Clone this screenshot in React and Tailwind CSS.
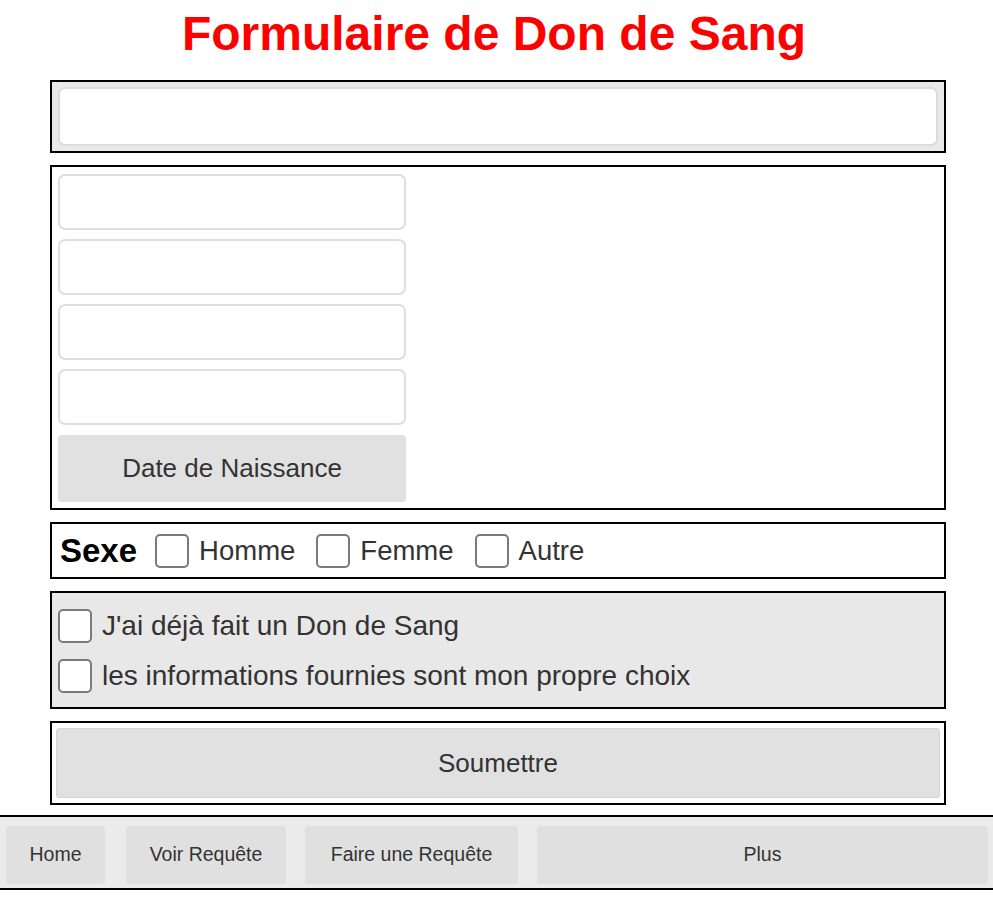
import React from 'react';

const inputCls = 'block w-[348px] h-[56px] bg-white border-2 border-[#dedede] rounded-[7px] outline-none';

function Check({ label, big }) {
    return (
        <label className="flex items-center h-[34px]">
            <input type="checkbox" className="appearance-none w-[34px] h-[34px] bg-white border-2 border-[#7a7a7a] rounded-[5px] shrink-0" />
            <span className={`ml-[10px] leading-[34px] text-[#333] ${big ? 'text-[28px]' : 'text-[27.5px]'}`}>{label}</span>
        </label>
    );
}

export default function App() {
    return (
        <div className="bg-white min-h-[900px] font-['Liberation_Sans',Arial,sans-serif]">
            <h1 className="pt-[6px] pr-[5px] text-center text-[48px] leading-[55px] font-bold text-[#ff0000]">
                Formulaire de Don de Sang
            </h1>

            <div className="ml-[50px] w-[896px] mt-[19px] flex flex-col gap-[12px]">
                {/* nom */}
                <div className="border-2 border-black bg-[#e9e9e9] px-[6px] pt-[5px] pb-[5px]">
                    <input type="text" className="block w-full h-[59px] bg-white border-2 border-[#dcdcdc] rounded-[7px] outline-none" />
                </div>

                {/* identite */}
                <div className="border-2 border-black bg-white pl-[6px] pt-[7px] pb-[6px] flex flex-col gap-[9px]">
                    <input type="text" className={inputCls} />
                    <input type="text" className={inputCls} />
                    <input type="text" className={inputCls} />
                    <input type="text" className={inputCls} />
                    <button className="w-[348px] h-[67px] mt-[1px] bg-[#e1e1e1] rounded-[4px] text-[26px] text-[#333]">
                        Date de Naissance
                    </button>
                </div>

                {/* sexe */}
                <div className="border-2 border-black bg-white h-[57px] pl-[8px] flex items-center">
                    <span className="text-[33px] leading-[40px] font-bold text-black mr-[18px]">Sexe</span>
                    <div className="flex items-center gap-[21px]">
                        <Check label="Homme" />
                        <Check label="Femme" />
                        <Check label="Autre" />
                    </div>
                </div>

                {/* consentement */}
                <div className="border-2 border-black bg-[#e8e8e8] h-[118px] pl-[6px] pt-[16px] flex flex-col gap-[16px]">
                    <Check label="J'ai déjà fait un Don de Sang" big />
                    <Check label="les informations fournies sont mon propre choix" big />
                </div>

                {/* submit */}
                <div className="border-2 border-black bg-white px-[4px] py-[5px]">
                    <button className="w-full h-[70px] bg-[#e1e1e1] border border-[#d4d4d4] rounded-[3px] text-[26px] text-[#333]">
                        Soumettre
                    </button>
                </div>
            </div>

            {/* nav */}
            <nav className="mt-[10px] border-y-2 border-black bg-[#ebebeb] h-[75px] pl-[6px] pr-[5px] pt-[9px] pb-[4px] flex gap-[19px]">
                <a href="#" className="w-[99px] mr-[2px] h-[58px] bg-[#e0e0e0] rounded-[3px] flex items-center justify-center text-[19.5px] text-[#333]">
                    Home
                </a>
                <a href="#" className="w-[160px] h-[58px] bg-[#e0e0e0] rounded-[3px] flex items-center justify-center text-[19.5px] text-[#333]">
                    Voir Requête
                </a>
                <a href="#" className="w-[213px] h-[58px] bg-[#e0e0e0] rounded-[3px] flex items-center justify-center text-[19.5px] text-[#333]">
                    Faire une Requête
                </a>
                <a href="#" className="flex-1 h-[58px] bg-[#e0e0e0] rounded-[3px] flex items-center justify-center text-[19.5px] text-[#333]">
                    Plus
                </a>
            </nav>
        </div>
    );
}
